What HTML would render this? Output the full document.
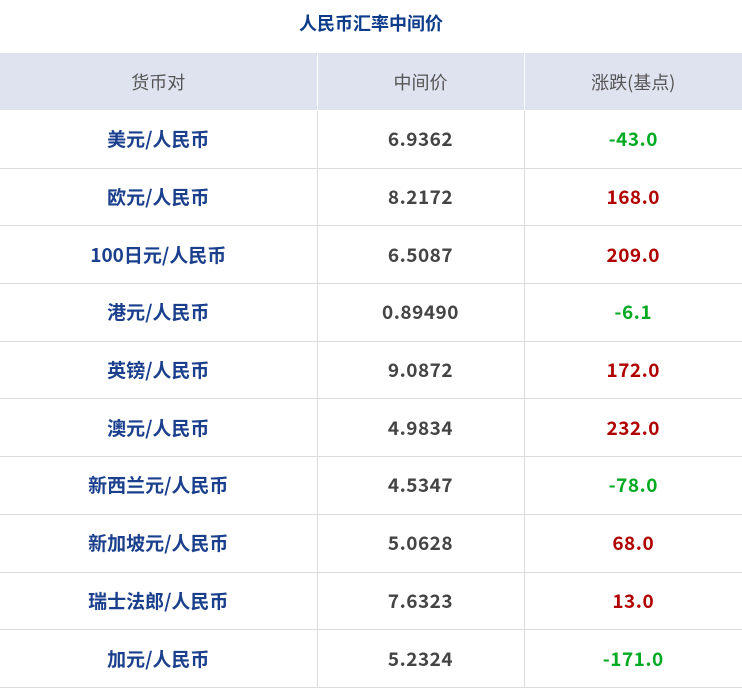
<!DOCTYPE html>
<html><head><meta charset="utf-8"><style>
body{margin:0;background:#fff;width:742px;height:688px;overflow:hidden;font-family:"Noto Sans CJK SC",sans-serif;}
.t{height:53px;line-height:46px;text-align:center;color:#0d3c8a;font-weight:bold;font-size:18px;}
table{border-collapse:collapse;width:742px;table-layout:fixed;}
td,th{border:1px solid #dcdcdc;text-align:center;height:56.7px;padding:0;font-size:19px;line-height:20px;}
th{background:#dfe3f0;color:#555;font-weight:normal;border-color:#fff;border-top:none;height:57px;font-size:18px;}
td{font-weight:bold;}
td:first-child,th:first-child{border-left:none}
td:last-child,th:last-child{border-right:none}
td.p{color:#1a3f8c}td.m{color:#444;letter-spacing:0.5px}.g{color:#00aa22;letter-spacing:0.5px}.r{color:#b00000;letter-spacing:0.5px}
</style></head><body>
<div class="t">人民币汇率中间价</div>
<table><colgroup><col style="width:317px"><col style="width:207px"><col></colgroup>
<tr><th>货币对</th><th>中间价</th><th>涨跌(基点)</th></tr>
<tr><td class="p">美元/人民币</td><td class="m">6.9362</td><td class="g">-43.0</td></tr>
<tr><td class="p">欧元/人民币</td><td class="m">8.2172</td><td class="r">168.0</td></tr>
<tr><td class="p">100日元/人民币</td><td class="m">6.5087</td><td class="r">209.0</td></tr>
<tr><td class="p">港元/人民币</td><td class="m">0.89490</td><td class="g">-6.1</td></tr>
<tr><td class="p">英镑/人民币</td><td class="m">9.0872</td><td class="r">172.0</td></tr>
<tr><td class="p">澳元/人民币</td><td class="m">4.9834</td><td class="r">232.0</td></tr>
<tr><td class="p">新西兰元/人民币</td><td class="m">4.5347</td><td class="g">-78.0</td></tr>
<tr><td class="p">新加坡元/人民币</td><td class="m">5.0628</td><td class="r">68.0</td></tr>
<tr><td class="p">瑞士法郎/人民币</td><td class="m">7.6323</td><td class="r">13.0</td></tr>
<tr><td class="p">加元/人民币</td><td class="m">5.2324</td><td class="g">-171.0</td></tr>
</table></body></html>
